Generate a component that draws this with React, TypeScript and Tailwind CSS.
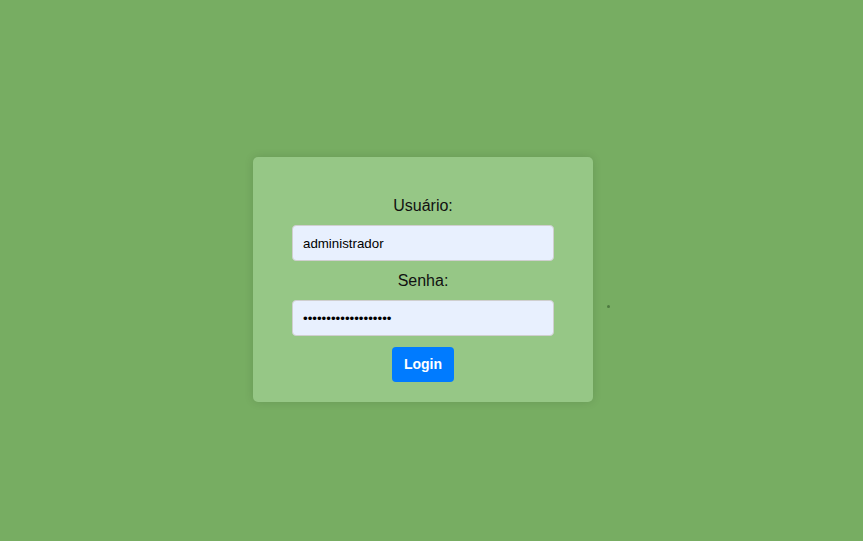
import React from "react";

export default function App() {
  return (
    <div
      className="w-full h-[541px] bg-[#77ad62] flex flex-row items-start justify-center pt-[157px] gap-[14px]"
      style={{ fontFamily: '"Liberation Sans", Arial, sans-serif' }}
    >
      <div className="w-[340px] bg-[#96c786] rounded-[5px] shadow-[0_0_10px_rgba(0,0,0,0.12)] flex flex-col items-center pt-[40px] pb-[20px]">
        <label className="text-[16px] leading-[18px] text-[#111]">Usuário:</label>
        <input
          className="mt-[10px] w-[262px] h-[36px] rounded-[4px] border border-[#cfcfcf] bg-[#e8f0fe] px-[10px] text-[13.3px] text-black outline-none"
          defaultValue="administrador"
          readOnly
        />
        <label className="mt-[11px] text-[16px] leading-[18px] text-[#111]">Senha:</label>
        <input
          type="password"
          className="mt-[10px] w-[262px] h-[36px] rounded-[4px] border border-[#cfcfcf] bg-[#e8f0fe] px-[10px] text-[13.3px] text-black outline-none"
          defaultValue="administrador123456"
          readOnly
        />
        <button className="mt-[11px] w-[62px] h-[35px] rounded-[4px] bg-[#007bff] text-white font-bold text-[14px]">
          Login
        </button>
      </div>
      <div className="mt-[148px] w-[3px] h-[3px] rounded-full bg-[#4e7a40]" />
    </div>
  );
}
